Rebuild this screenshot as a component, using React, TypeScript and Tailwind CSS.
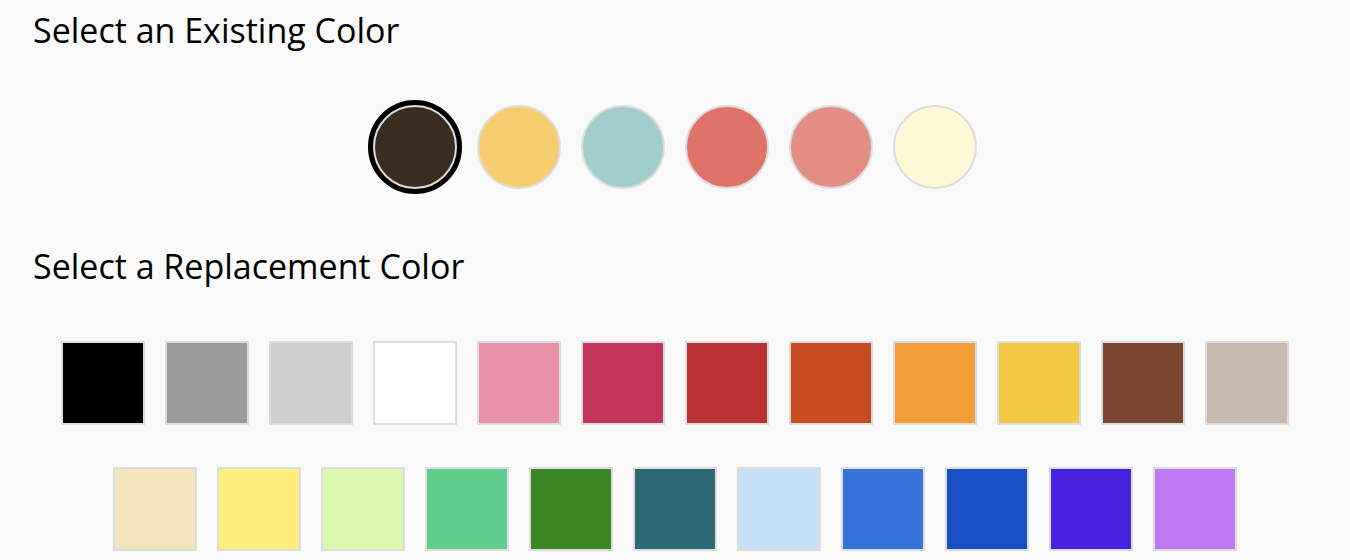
const existing = ['#3a2d1f', '#f6cd6e', '#a2cdcd', '#df736a', '#e38e85', '#fdf8d6'];

const replacements = [
  '#000000', '#9b9b9b', '#cdcdcd', '#ffffff', '#e991a8', '#c3345b',
  '#bb3232', '#c84c22', '#f19d38', '#f4c944', '#7a4631', '#c9b8ae',
  '#f2e5bc', '#fded7b', '#d9f7ae', '#60cc8c', '#3b8726', '#2c6975',
  '#c5dff7', '#3474d9', '#1a50c6', '#4820e0', '#bf7af3',
];

export default function App() {
  const selected = 0;
  return (
    <div
      className="min-h-[560px] w-[1350px] bg-[#f9f9f9] px-[33px] text-black"
      style={{ fontFamily: '"Open Sans", "Noto Sans", sans-serif' }}
    >
      <h2 className="pt-[6px] text-[34px] leading-[48px]">Select an Existing Color</h2>

      {/* existing colours */}
      <div className="mt-[51px] flex justify-center gap-[20px]">
        {existing.map((c, i) => (
          <button
            key={c}
            className={
              'h-[84px] w-[84px] rounded-full border-2 border-[#dddddd] ' +
              (i === selected ? 'outline-[5px] outline-solid outline-black' : '')
            }
            style={{ backgroundColor: c }}
          />
        ))}
      </div>

      <h2 className="mt-[53px] text-[34px] leading-[48px]">Select a Replacement Color</h2>

      {/* replacement swatches */}
      <div className="mt-[51px] flex flex-wrap justify-center gap-x-[20px] gap-y-[42px]">
        {replacements.map((c) => (
          <button
            key={c}
            className="h-[84px] w-[84px] border-2 border-[#dddddd]"
            style={{ backgroundColor: c }}
          />
        ))}
      </div>
    </div>
  );
}
